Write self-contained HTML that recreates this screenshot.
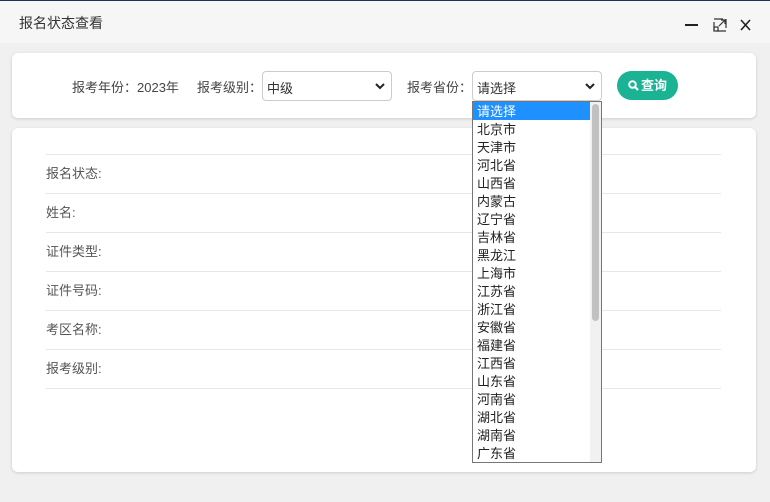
<!DOCTYPE html>
<html><head><meta charset="utf-8"><style>
*{margin:0;padding:0;box-sizing:border-box}
body{width:770px;height:502px;background:#f0f0f0;font-family:"Liberation Sans","Noto Sans CJK SC",sans-serif;font-size:13px;color:#333;position:relative;overflow:hidden}
.top{position:absolute;left:0;top:0;width:770px;height:43px;background:#f6f6f6;border-top:1px solid #1e3350}
.title{position:absolute;left:19px;top:12px;font-size:14px;color:#333}
.card{position:absolute;background:#fff;border-radius:6px;box-shadow:0 1px 3px rgba(0,0,0,.15)}
.t{position:absolute;font-size:13px;color:#444;white-space:nowrap}
.sel{position:absolute;height:30px;border:1px solid #ccc;border-radius:4px;background:#fff}
.sel span{position:absolute;left:4px;top:6px;font-size:13px;color:#333}
.sel svg{position:absolute;right:6px;top:11px}
.btn{position:absolute;left:617px;top:71px;width:61px;height:29px;border-radius:15px;background:#1ab394;color:#fff;font-size:13px;font-weight:bold;line-height:29px}
.line{position:absolute;left:46px;width:675px;height:1px;background:#e7e7e7}
.lab{position:absolute;left:46px;font-size:13px;color:#555}
.dd{position:absolute;left:472px;top:101px;width:130px;height:362px;border:1px solid #767676;background:#fff;overflow:hidden}
.dd div{height:18px;line-height:19px;padding-left:4px;font-size:13px;color:#222;width:118px}
.dd .h{background:#1e90ff;color:#fff}
.sb{position:absolute;right:0;top:0;width:11px;height:100%;background:#f1f1f1}
.th{position:absolute;left:2px;top:2px;width:7px;height:217px;background:#c1c1c1;border-radius:4px}
</style></head><body>
<div class="top"><div class="title">报名状态查看</div>
<svg style="position:absolute;left:685px;top:16px" width="66" height="16" viewBox="0 0 66 16">
<line x1="0" y1="8" x2="13" y2="8" stroke="#222" stroke-width="2"/>
<rect x="29" y="2" width="12" height="12" fill="none" stroke="#333" stroke-width="1.2" stroke-dasharray="9 3"/>
<path d="M34 9 L40 3 M36 3 H40 V7" stroke="#333" stroke-width="1.2" fill="none"/>
<rect x="29" y="10" width="4" height="4" fill="none" stroke="#333" stroke-width="1.2"/>
<path d="M56 3 L65 13 M65 3 L56 13" stroke="#222" stroke-width="1.6"/>
</svg></div>
<div class="card" style="left:12px;top:53px;width:744px;height:65px"></div>
<div class="t" style="left:72px;top:77px">报考年份：2023年</div>
<div class="t" style="left:197px;top:77px">报考级别：</div>
<div class="sel" style="left:262px;top:71px;width:130px"><span>中级</span><svg width="10" height="7" viewBox="0 0 10 7"><path d="M1 1 L5 5 L9 1" stroke="#222" stroke-width="2" fill="none"/></svg></div>
<div class="t" style="left:407px;top:77px">报考省份：</div>
<div class="sel" style="left:472px;top:71px;width:130px"><span>请选择</span><svg width="10" height="7" viewBox="0 0 10 7"><path d="M1 1 L5 5 L9 1" stroke="#222" stroke-width="2" fill="none"/></svg></div>
<div class="btn"><svg style="position:absolute;left:11px;top:9px" width="11" height="11" viewBox="0 0 11 11"><circle cx="4.5" cy="4.5" r="3.3" stroke="#fff" stroke-width="2" fill="none"/><path d="M7 7 L10 10" stroke="#fff" stroke-width="2.2"/></svg><span style="position:absolute;left:24px">查询</span></div>
<div class="card" style="left:12px;top:128px;width:744px;height:344px"></div>
<div class="line" style="top:154px"></div><div class="lab" style="top:163px">报名状态:</div>
<div class="line" style="top:193px"></div><div class="lab" style="top:202px">姓名:</div>
<div class="line" style="top:232px"></div><div class="lab" style="top:241px">证件类型:</div>
<div class="line" style="top:271px"></div><div class="lab" style="top:280px">证件号码:</div>
<div class="line" style="top:310px"></div><div class="lab" style="top:319px">考区名称:</div>
<div class="line" style="top:349px"></div><div class="lab" style="top:358px">报考级别:</div>
<div class="line" style="top:388px"></div>
<div class="dd"><div class="h">请选择</div><div>北京市</div><div>天津市</div><div>河北省</div><div>山西省</div><div>内蒙古</div><div>辽宁省</div><div>吉林省</div><div>黑龙江</div><div>上海市</div><div>江苏省</div><div>浙江省</div><div>安徽省</div><div>福建省</div><div>江西省</div><div>山东省</div><div>河南省</div><div>湖北省</div><div>湖南省</div><div>广东省</div>
<span class="sb"><span class="th"></span></span></div>
</body></html>
